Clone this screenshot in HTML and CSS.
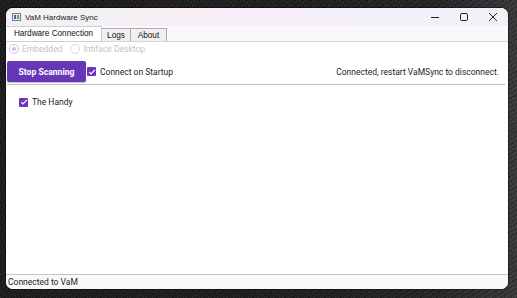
FILE: index.html
```html
<!DOCTYPE html>
<html>
<head>
<meta charset="utf-8">
<link rel="stylesheet" href="styles.css">
</head>
<body>
<div class="desk">
  <div class="window">
    <div class="titlebar">
      <div class="appicon"><span class="ai-a"></span><span class="ai-b"></span></div>
      <div class="title">VaM Hardware Sync</div>
      <div class="controls">
        <svg class="ctl" width="10" height="10" viewBox="0 0 10 10"><path d="M1 5.5h8" stroke="#222" stroke-width="1"/></svg>
        <svg class="ctl" width="10" height="10" viewBox="0 0 10 10"><rect x="1.5" y="1.5" width="7" height="7" rx="1.2" fill="none" stroke="#222" stroke-width="1"/></svg>
        <svg class="ctl" width="10" height="10" viewBox="0 0 10 10"><path d="M1 1l8 8M9 1l-8 8" stroke="#222" stroke-width="1"/></svg>
      </div>
    </div>
    <div class="tabstrip">
      <div class="tab active">Hardware Connection</div>
      <div class="tab logs">Logs</div>
      <div class="tab about">About</div>
    </div>
    <div class="content">
      <div class="radios">
        <label class="radio"><span class="rdot on"></span>Embedded</label>
        <label class="radio"><span class="rdot"></span>Intiface Desktop</label>
      </div>
      <div class="toolbar">
        <button class="btn">Stop Scanning</button>
        <label class="check"><span class="box"><svg width="8" height="8" viewBox="0 0 8 8"><path d="M1.2 4.1l1.9 1.9 3.8-4.2" fill="none" stroke="#fff" stroke-width="1.2"/></svg></span>Connect on Startup</label>
        <div class="status-msg">Connected, restart VaMSync to disconnect.</div>
      </div>
      <div class="devices">
        <label class="check"><span class="box"><svg width="8" height="8" viewBox="0 0 8 8"><path d="M1.2 4.1l1.9 1.9 3.8-4.2" fill="none" stroke="#fff" stroke-width="1.2"/></svg></span>The Handy</label>
      </div>
    </div>
    <div class="statusbar">Connected to VaM</div>
  </div>
</div>
</body>
</html>
```
FILE: styles.css
```css
html, body {
  margin: 0;
  padding: 0;
}
body {
  width: 517px;
  height: 298px;
  overflow: hidden;
  background: #1a1a1a;
  background-image:
    repeating-linear-gradient(75deg, rgba(255,255,255,0.05) 0 1px, transparent 1px 3px),
    repeating-linear-gradient(-30deg, rgba(0,0,0,0.3) 0 1px, transparent 1px 4px),
    linear-gradient(90deg, #1c1c1c 0%, #202020 60%, #262626 85%, #3a3a3a 100%);
}
.desk {
  padding: 8px 0 0 6px;
}
.window {
  width: 502px;
  height: 281px;
  background: #ffffff;
  border-radius: 7px;
  overflow: hidden;
  display: flex;
  flex-direction: column;
  box-shadow: 0 0 0 1px rgba(0,0,0,0.4);
}
.titlebar {
  height: 18px;
  display: flex;
  align-items: center;
  background: linear-gradient(90deg, #f4f0f5 0%, #f6eef6 50%, #f1f1f8 100%);
  font-family: "Liberation Sans", Arial, sans-serif;
  font-size: 8px;
  color: #1a1a1a;
}
.appicon {
  width: 9px;
  height: 8px;
  margin-left: 6px;
  margin-right: 4px;
  border: 1px solid #7a7f86;
  background: #e8eaed;
  display: flex;
  gap: 1px;
  padding: 1px;
  box-sizing: border-box;
}
.ai-a { width: 2px; background: #2e6fb0; }
.ai-b { width: 2px; background: #5aa37a; }
.title {
  flex: 1;
  padding-top: 1px;
}
.controls {
  display: flex;
  align-items: center;
  gap: 19px;
  margin-right: 10px;
}
.ctl { display: block; }
.tabstrip {
  height: 15px;
  background: #f9f9f9;
  border-bottom: 1px solid #d6d6d6;
  display: flex;
  align-items: flex-end;
  font-family: "Liberation Sans", Arial, sans-serif;
  font-size: 8.2px;
  color: #111;
}
.tab {
  height: 12px;
  line-height: 13px;
  background: #f0f0f0;
  border: 1px solid #adadad;
  border-bottom: none;
  box-sizing: content-box;
  text-align: center;
}
.tab.logs {
  width: 28px;
  border-left: none;
}
.tab.about {
  width: 35px;
  border-left: none;
}
.tab.active {
  height: 14px;
  line-height: 13px;
  width: 95px;
  background: #ffffff;
  border: 1px solid #d0d0d0;
  border-left: none;
  border-right: 1px solid #c8c8c8;
  position: relative;
  z-index: 1;
  margin-bottom: -1px;
}
.content {
  flex: 1;
  display: flex;
  flex-direction: column;
  font-family: Roboto, "Liberation Sans", sans-serif;
  font-size: 8.5px;
  color: #1e1e1e;
}
.radios {
  display: flex;
  gap: 8px;
  padding: 0 0 0 3px;
  height: 14px;
  align-items: center;
  color: #c4c4c4;
}
.radio {
  display: flex;
  align-items: center;
  gap: 3px;
}
.rdot {
  width: 10px;
  height: 10px;
  border-radius: 50%;
  border: 1px solid #dadada;
  box-sizing: border-box;
  position: relative;
}
.rdot.on {
  border-color: #cdbde8;
}
.rdot.on::after {
  content: "";
  position: absolute;
  left: 2px;
  top: 2px;
  width: 4px;
  height: 4px;
  border-radius: 50%;
  background: #cdbde8;
}
.toolbar {
  display: flex;
  align-items: center;
  margin-top: 5px;
  padding: 0 9px 0 1px;
  height: 21px;
}
.btn {
  height: 21px;
  width: 79px;
  border: none;
  border-radius: 2px;
  background: #6737b8;
  color: #fff;
  font-family: Roboto, "Liberation Sans", sans-serif;
  font-weight: 700;
  font-size: 8.6px;
  padding: 0;
  box-shadow: 0 1px 1px rgba(0,0,0,0.25);
}
.check {
  display: flex;
  align-items: center;
  gap: 4px;
}
.toolbar .check {
  margin-left: 1px;
}
.box {
  width: 9px;
  height: 9px;
  background: #6737b8;
  border-radius: 1px;
  display: flex;
  align-items: center;
  justify-content: center;
}
.box svg { display: block; }
.status-msg {
  margin-left: auto;
}
.devices {
  flex: 1;
  margin: 2px 3px 0 1px;
  border-top: 1px solid #c4c4c4;
  padding: 12px 0 0 12px;
}
.statusbar {
  height: 14px;
  line-height: 15px;
  border-top: 1px solid #c4c4c4;
  background: #f9f9f9;
  padding-left: 2px;
  font-family: Roboto, "Liberation Sans", sans-serif;
  font-size: 8.5px;
  color: #1e1e1e;
}
```
